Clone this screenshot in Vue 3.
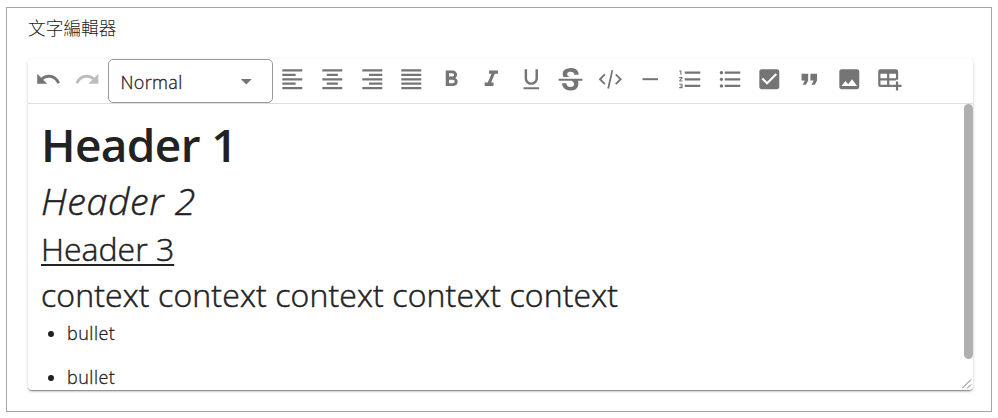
<script setup>
const history = [
  { name: 'Undo', d: 'M12.5 8c-2.65 0-5.05.99-6.9 2.6L2 7v9h9l-3.62-3.62c1.39-1.16 3.16-1.88 5.12-1.88 3.54 0 6.55 2.31 7.6 5.5l2.37-.78C21.08 11.03 17.15 8 12.5 8z' },
  { name: 'Redo', off: true, d: 'M18.4 10.6C16.55 8.99 14.15 8 11.5 8c-4.65 0-8.58 3.03-9.96 7.22L3.9 16c1.05-3.19 4.05-5.5 7.6-5.5 1.95 0 3.73.72 5.12 1.88L13 16h9V7l-3.6 3.6z' },
]
const tools = [
  { name: 'Align left', d: 'M15 15H3v2h12v-2zm0-8H3v2h12V7zM3 13h18v-2H3v2zm0 8h18v-2H3v2zM3 3v2h18V3H3z' },
  { name: 'Align center', d: 'M7 15v2h10v-2H7zm-4 6h18v-2H3v2zm0-8h18v-2H3v2zm4-6v2h10V7H7zM3 3v2h18V3H3z' },
  { name: 'Align right', d: 'M3 21h18v-2H3v2zm6-4h12v-2H9v2zm-6-4h18v-2H3v2zm6-4h12V7H9v2zM3 3v2h18V3H3z' },
  { name: 'Justify', d: 'M3 21h18v-2H3v2zm0-4h18v-2H3v2zm0-4h18v-2H3v2zm0-4h18V7H3v2zm0-6v2h18V3H3z' },
  { name: 'Bold', d: 'M15.6 10.79c.97-.67 1.65-1.77 1.65-2.79 0-2.26-1.75-4-4-4H7v14h7.04c2.09 0 3.71-1.7 3.71-3.79 0-1.52-.86-2.82-2.15-3.42zM10 6.5h3c.83 0 1.5.67 1.5 1.5s-.67 1.5-1.5 1.5h-3v-3zm3.5 9H10v-3h3.5c.83 0 1.5.67 1.5 1.5s-.67 1.5-1.5 1.5z' },
  { name: 'Italic', d: 'M10 4v3h2.21l-3.42 8H6v3h8v-3h-2.21l3.42-8H18V4z' },
  { name: 'Underline', d: 'M12 17c3.31 0 6-2.69 6-6V3h-2.2v8c0 2.1-1.7 3.8-3.8 3.8S8.2 13.1 8.2 11V3H6v8c0 3.31 2.69 6 6 6zm-7 2.2v1.8h14v-1.8H5z' },
  { name: 'Strikethrough', d: 'M23 11.4v1.8h-4.1C19.9 16.14 19.6 22 12.4 22 4.25 22.05 4.57 15.5 4.57 15.5l3.97.05c.03 3.37 3.16 3.37 3.78 3.33.64-.05 3.03-.04 3.22-2.38.08-1.09-1.02-2.62-2.22-3.3H1.5v-1.8H23zm-3.39-3.51-3.98-.03s.17-2.77-3.28-2.78C8.9 5.06 9.2 7.28 9.2 7.56c.04.28.34 1.66 3 2.32H5.91S2.42 3.15 10.94 2c8.71-1.2 8.69 5.91 8.67 5.89z' },
  { name: 'Code', d: 'M7.7 8.2 6.5 7 1.5 12l5 5 1.2-1.2L3.9 12zM16.3 8.2 17.5 7l5 5-5 5-1.2-1.2 3.8-3.8zM13.1 3.5l1.6.4-3.8 16.6-1.6-.4z' },
  { name: 'Horizontal rule', d: 'M19 12.8H5v-1.8h14v1.8z' },
  { name: 'Numbered list', d: 'M2 17h2v.5H3v1h1v.5H2v1h3v-4H2v1zm1-9h1V4H2v1h1v3zm-1 3h1.8L2 13.1v.9h3v-1H3.2L5 10.9V10H2v1zm5-6v2h14V5H7zm0 14h14v-2H7v2zm0-6h14v-2H7v2z' },
  { name: 'Bulleted list', d: 'M4 10.5c-.83 0-1.5.67-1.5 1.5s.67 1.5 1.5 1.5 1.5-.67 1.5-1.5-.67-1.5-1.5-1.5zm0-6c-.83 0-1.5.67-1.5 1.5S3.17 7.5 4 7.5 5.5 6.83 5.5 6 4.83 4.5 4 4.5zm0 12c-.83 0-1.5.68-1.5 1.5s.68 1.5 1.5 1.5 1.5-.68 1.5-1.5-.67-1.5-1.5-1.5zM7 19h14v-2H7v2zm0-6h14v-2H7v2zm0-8v2h14V5H7z' },
  { name: 'Checklist', d: 'M19 3H5c-1.11 0-2 .9-2 2v14c0 1.1.89 2 2 2h14c1.11 0 2-.9 2-2V5c0-1.1-.89-2-2-2zm-9 14l-5-5 1.41-1.41L10 14.17l7.59-7.59L19 8l-9 9z' },
  { name: 'Quote', d: 'M6 17h3l2-4V7H5v6h3zm8 0h3l2-4V7h-6v6h3z' },
  { name: 'Image', d: 'M21 19V5c0-1.1-.9-2-2-2H5c-1.1 0-2 .9-2 2v14c0 1.1.9 2 2 2h14c1.1 0 2-.9 2-2zM8.5 13.5l2.5 3.01L14.5 12l4.5 6H5l3.5-4.5z' },
  { name: 'Insert table', d: 'M3.9 3h14.2a1.9 1.9 0 0 1 1.9 1.9V12.4h-2V13h-6v4h2.8v2H3.9A1.9 1.9 0 0 1 2 17.1V4.9A1.9 1.9 0 0 1 3.9 3zM4 7v4h6V7zM12 7v4h6V7zM4 13v4h6v-4zM18 14h2v3h3v2h-3v3h-2v-3h-3v-2h3z' },
]
const bullets = ['bullet', 'bullet']
</script>

<template>
  <section class="frame">
    <div class="label">文字編輯器</div>
    <div class="editor">
      <div class="toolbar">
        <button v-for="t in history" :key="t.name" class="tool" :class="{ off: t.off }">
          <svg viewBox="0 0 24 24"><path :d="t.d" /></svg>
        </button>
        <div class="select">
          <span>Normal</span>
          <svg viewBox="0 0 24 24"><path d="M7 10l5 5 5-5z" /></svg>
        </div>
        <button v-for="t in tools" :key="t.name" class="tool">
          <svg viewBox="0 0 24 24"><path :d="t.d" fill-rule="evenodd" /></svg>
        </button>
      </div>
      <div class="body">
        <div class="content">
          <h1><span>Header 1</span></h1>
          <h2><span>Header 2</span></h2>
          <h3><span>Header 3</span></h3>
          <p><span>context context context context context</span></p>
          <ul>
            <li v-for="(b, i) in bullets" :key="i"><span>{{ b }}</span></li>
          </ul>
        </div>
        <div class="scroll"><div class="thumb"></div></div>
        <svg class="grip" viewBox="0 0 10 10"><path d="M0 9.5 9 .5M5 9.5l4-4" /></svg>
      </div>
    </div>
  </section>
</template>

<style>
body { margin: 0; background: #fff; }
</style>

<style scoped>
.frame {
  box-sizing: border-box;
  width: 986px;
  height: 405px;
  margin: 7px 0 0 6px;
  padding: 0 18px 0 21px;
  border: 1px solid #a6a6a6;
  font-family: "Open Sans", "Noto Sans CJK TC", sans-serif;
  font-weight: 300;
  color: #222;
}
.label { height: 51px; line-height: 39px; font-size: 17.7px; font-family: "Noto Sans CJK TC", sans-serif; }
.editor {
  width: 945px;
  height: 331px;
  border-radius: 4px;
  box-shadow: 0 2px 2px -1px rgba(0,0,0,.38), 0 1px 1px rgba(0,0,0,.14), 0 1px 4px rgba(0,0,0,.12);
}
.toolbar {
  display: flex;
  align-items: flex-start;
  box-sizing: border-box;
  height: 45px;
  border-bottom: 1px solid #ddd;
}
.tool {
  flex: none;
  width: 39.77px;
  height: 40px;
  padding: 0;
  border: 0;
  background: none;
  display: grid;
  place-items: center;
}
svg { display: block; width: 26.6px; height: 26.6px; fill: #757575; }
.off svg { fill: #bdbdbd; }
.select {
  flex: none;
  box-sizing: border-box;
  width: 165px;
  height: 44px;
  border: 1px solid #999;
  border-radius: 5px;
  padding: 1px 12px 0 12px;
  display: flex;
  align-items: center;
  justify-content: space-between;
  font-size: 18px;
  letter-spacing: .35px;
  -webkit-text-stroke: .3px #222;
}
.body { position: relative; display: flex; height: 286px; overflow: hidden; border-radius: 0 0 4px 4px; }
.content { flex: 1; padding: 12px 13px 0; overflow: hidden; -webkit-text-stroke: .5px #222; }
h1, h2, h3, p, ul { margin: 0; font-weight: 300; white-space: nowrap; }
h1 { height: 56px; line-height: 56px; font-size: 46px; font-weight: 600; letter-spacing: -.65px; -webkit-text-stroke: 0; }
h2 { height: 56px; line-height: 57px; font-size: 37.5px; font-style: italic; letter-spacing: .7px; }
h3 { height: 43px; line-height: 41px; font-size: 32px; text-decoration: underline; text-decoration-thickness: 2px; text-underline-offset: 3px; text-decoration-skip-ink: none; }
p { height: 49px; line-height: 47px; font-size: 32px; letter-spacing: .13px; }
ul { padding-left: 26px; font-size: 18px; letter-spacing: .5px; -webkit-text-stroke: .3px #222; }
li { height: 44px; line-height: 26px; }
.scroll { width: 9px; }
.thumb { height: 255px; border-radius: 5px; background: #b0b0b0; }
.grip { position: absolute; right: 1px; bottom: 1px; width: 10px; height: 10px; fill: none; stroke: #777; stroke-width: 1; }
</style>
